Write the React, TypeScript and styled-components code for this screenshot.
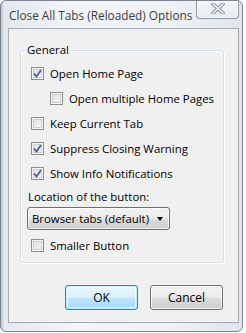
import React from "react";
import styled, { createGlobalStyle } from "styled-components";

const GlobalStyle = createGlobalStyle`
  html, body {
    margin: 0;
    padding: 0;
    background: #ffffff;
  }
  body {
    font-family: "Segoe UI", "Open Sans", "Noto Sans", sans-serif;
    font-size: 11.4px;
    color: #000;
  }
`;

const Window = styled.div`
  position: relative;
  width: 243px;
  height: 332px;
  box-sizing: border-box;
  border: 1px solid #7c8590;
  border-radius: 6px;
  background: linear-gradient(
    90deg,
    #b9c1ca 0px,
    #e4e9ee 3px,
    #f2f5f8 30%,
    #eef2f5 70%,
    #dfe5eb 100%
  );
  display: flex;
  flex-direction: column;
  padding: 0 3px 8px 7px;
  overflow: hidden;
`;

const TitleBar = styled.div`
  height: 27px;
  display: flex;
  align-items: flex-start;
  justify-content: space-between;
`;

const Title = styled.div`
  padding: 6px 0 0 1px;
  font-size: 11.8px;
  color: #3c3f44;
  white-space: nowrap;
`;

const CloseButton = styled.div`
  margin-top: -2px;
  width: 43px;
  height: 20px;
  box-sizing: border-box;
  border: 1px solid #8d97a3;
  border-top: none;
  border-radius: 0 0 4px 4px;
  background: linear-gradient(#f7f9fb, #e6ebf0);
  box-shadow: inset 0 0 0 1px rgba(255, 255, 255, 0.8);
  display: flex;
  align-items: center;
  justify-content: center;
`;

const Client = styled.div`
  flex: 1;
  background: #f0f0f0;
  border: 1px solid #a3acb6;
  display: flex;
  flex-direction: column;
`;

const GroupBox = styled.fieldset`
  margin: 14px 14px 0 11px;
  padding: 4px 0 4px 10px;
  border: 1px solid #d5dfe5;
  border-radius: 3px;
  box-shadow: inset 1px 1px 0 #ffffff, 1px 1px 0 #ffffff;
  display: flex;
  flex-direction: column;
`;

const Legend = styled.legend`
  margin-left: -7px;
  padding: 0 3px;
  line-height: 14px;
  color: #000;
`;

const Row = styled.label<{ $indent?: boolean }>`
  height: 25px;
  display: flex;
  align-items: center;
  gap: 6px;
  padding-left: ${(p) => (p.$indent ? "19px" : "0")};
  white-space: nowrap;
`;

const Box = styled.span`
  width: 13px;
  height: 13px;
  box-sizing: border-box;
  border: 1px solid #8f8f8f;
  background: linear-gradient(135deg, #dcdcdc, #fbfbfb);
  box-shadow: inset 0 0 0 1px #f4f4f4, inset 0 0 0 2px #cfcfcf;
  display: flex;
  align-items: center;
  justify-content: center;
  flex: none;
`;

const Caption = styled.div`
  height: 21px;
  display: flex;
  align-items: center;
  margin-left: -3px;
  white-space: nowrap;
`;

const Select = styled.div`
  margin-left: -4px;
  width: 143px;
  height: 23px;
  box-sizing: border-box;
  border: 1px solid #707070;
  border-radius: 3px;
  background: linear-gradient(#f2f2f2 0%, #ebebeb 50%, #dddddd 51%, #cfcfcf 100%);
  box-shadow: inset 0 0 0 1px rgba(255, 255, 255, 0.7);
  display: flex;
  align-items: center;
  justify-content: space-between;
  padding: 0 6px 0 4px;
  margin-bottom: 3px;
  white-space: nowrap;
`;

const Arrow = styled.span`
  width: 0;
  height: 0;
  border-left: 3.5px solid transparent;
  border-right: 3.5px solid transparent;
  border-top: 4px solid #000;
`;

const Buttons = styled.div`
  margin-top: 22px;
  display: flex;
  justify-content: flex-end;
  gap: 12px;
  padding-right: 15px;
`;

const Button = styled.div<{ $default?: boolean }>`
  width: 73px;
  height: 25px;
  box-sizing: border-box;
  border: 1px solid ${(p) => (p.$default ? "#3c7fb1" : "#707070")};
  border-radius: 3px;
  background: ${(p) =>
    p.$default
      ? "linear-gradient(#eaf6fd 0%, #d9f0fc 50%, #bee6fd 51%, #a7d9f5 100%)"
      : "linear-gradient(#f2f2f2 0%, #ebebeb 50%, #dddddd 51%, #cfcfcf 100%)"};
  box-shadow: ${(p) =>
    p.$default
      ? "inset 0 0 0 1px #48d1fa40, inset 0 0 0 2px rgba(255,255,255,0.6)"
      : "inset 0 0 0 1px rgba(255,255,255,0.7)"};
  display: flex;
  align-items: center;
  justify-content: center;
  font-size: 12px;
`;

function Check({ checked }: { checked?: boolean }) {
  return (
    <Box>
      {checked && (
        <svg width="9" height="9" viewBox="0 0 9 9">
          <path
            d="M1 4.5 L3.5 7.5 L8 1"
            fill="none"
            stroke="#4a5f97"
            strokeWidth="1.8"
          />
        </svg>
      )}
    </Box>
  );
}

const options = [
  { text: "Open Home Page", checked: true },
  { text: "Open multiple Home Pages", indent: true },
  { text: "Keep Current Tab" },
  { text: "Suppress Closing Warning", checked: true },
  { text: "Show Info Notifications", checked: true },
];

export default function App() {
  return (
    <>
      <GlobalStyle />
      <Window>
        <TitleBar>
          <Title>Close All Tabs (Reloaded) Options</Title>
          <CloseButton>
            <svg width="14" height="11" viewBox="0 0 14 11">
              <path
                d="M2 1 L12 10 M12 1 L2 10"
                stroke="#8a939d"
                strokeWidth="3.6"
                strokeLinecap="round"
              />
              <path
                d="M2 1 L12 10 M12 1 L2 10"
                stroke="#f4f6f8"
                strokeWidth="1.6"
                strokeLinecap="round"
              />
            </svg>
          </CloseButton>
        </TitleBar>
        <Client>
          <GroupBox>
            <Legend>General</Legend>
            {options.map((o) => (
              <Row key={o.text} $indent={o.indent}>
                <Check checked={o.checked} />
                {o.text}
              </Row>
            ))}
            <Caption>Location of the button:</Caption>
            <Select>
              Browser tabs (default)
              <Arrow />
            </Select>
            <Row>
              <Check />
              Smaller Button
            </Row>
          </GroupBox>
          <Buttons>
            <Button $default>OK</Button>
            <Button>Cancel</Button>
          </Buttons>
        </Client>
      </Window>
    </>
  );
}
